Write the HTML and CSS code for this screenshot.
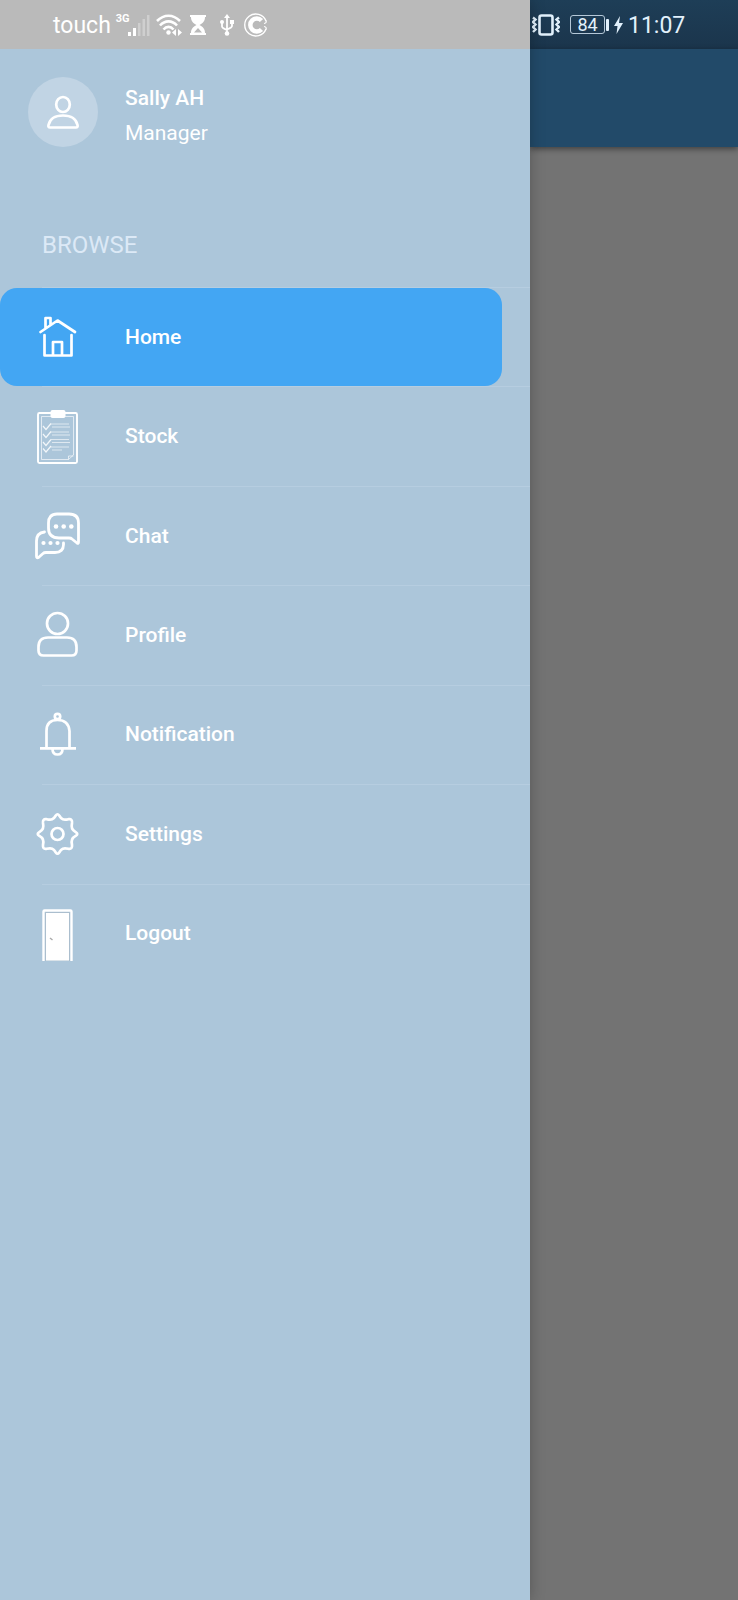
FILE: index.html
```html
<!DOCTYPE html>
<html lang="en">
<head>
<meta charset="utf-8">
<meta name="viewport" content="width=device-width, initial-scale=1">
<title>Navigation</title>
<link rel="stylesheet" href="styles.css">
</head>
<body>
<div class="layout">
  <aside class="drawer">
    <div class="status status-left">
      <span class="carrier">touch</span>
      <span class="network">3G</span>
      <svg class="signal" width="22" height="22" viewBox="0 0 22 22" fill="#fff"><path d="M0 18h3v4H0zM5 14h3v8H5z"/><path opacity=".3" d="M10 9h2.500v13H10zM14.500 5H17v17h-2.500zM19 1h2.500v21H19z"/></svg>
      <svg class="wifi" width="26" height="22" viewBox="0 0 26 22" fill="none" stroke="#fff" stroke-width="2.600"><path d="M1 7C8 0 17 0 24 7M4 11.500C9 6 16 6 21 11.500M7.500 15.500C10.500 12 14.500 12 17.500 15.500"/><circle cx="12.500" cy="18.500" r="2.200" fill="#fff" stroke="none"/><path fill="#fff" stroke="none" d="M20 15v7l-4-3.500zM22 15v7l4-3.500z"/></svg>
      <svg class="hourglass" width="16" height="22" viewBox="0 0 16 22" fill="#fff"><path fill-rule="evenodd" d="M0 1h16v2h-1c0 4-2 6-5.500 8 3.500 2 5.500 4 5.500 8h1v2H0v-2h1c0-4 2-6 5.500-8C3 9 1 7 1 3H0zM4 18.500h8L8 14z"/></svg>
      <svg class="usb" width="14" height="22" viewBox="0 0 14 22" fill="none" stroke="#fff" stroke-width="1.800"><path d="M7 2v17M2 9v3.500q0 1.500 5 3.500M12 9v3q0 1.500-5 3.500"/><path fill="#fff" stroke="none" d="M7 0l3 4H4zM10 6h4v4h-4z"/><circle cx="2" cy="8" r="2" fill="#fff" stroke="none"/><circle cx="7" cy="19.500" r="2.300" fill="#fff" stroke="none"/></svg>
      <svg class="badge" width="24" height="24" viewBox="0 0 24 24" fill="none" stroke="#fff"><path stroke-width="1.400" d="M22 8A11 11 0 1 0 22 16"/><path stroke-width="4.500" d="M17.500 7.500A6.500 6.500 0 1 0 17.500 16.500"/><path stroke-width="1.200" d="M20 10.500Q23 10 22 7.500M20 13.500Q23 14 22 16.500"/></svg>
    </div>

    <header class="user">
      <div class="avatar">
        <svg width="32" height="34" viewBox="0 0 32 34" fill="none" stroke="#fff" stroke-width="2.700"><ellipse cx="16" cy="9.500" rx="6.800" ry="7.500"/><path stroke-linejoin="round" d="M1.500 30C3 23 9 20.500 16 20.500S29 23 30.500 30Q31 32.500 29 32.500H3Q1 32.500 1.500 30z"/></svg>
      </div>
      <div class="identity">
        <div class="name">Sally AH</div>
        <div class="role">Manager</div>
      </div>
    </header>

    <h2 class="section">BROWSE</h2>

    <nav class="menu">
      <a class="item active" href="#home">
        <svg class="icon" viewBox="0 0 46 56" fill="none" stroke="#fff" stroke-width="2.700" stroke-linecap="round" stroke-linejoin="round"><path d="M5.500 23L22.500 11.500 40 23M10.500 19V9h5v6.500M9.500 26v20.500h27V26M18 46.500V33h9v13.500"/></svg>
        <span>Home</span>
      </a>
      <a class="item" href="#stock">
        <svg class="icon" viewBox="0 0 46 56" fill="none" stroke="#fff"><rect x="3" y="5" width="39" height="50" rx="1.500" stroke-width="1.900"/><path stroke-width=".8" opacity=".8" d="M6.500 8.500h32V47l-5 4.500h-27zM33.500 51.500V48h5"/><rect x="15.500" y="2" width="15" height="8" rx="2" fill="#fff" stroke="none"/><path stroke-width="1.200" opacity=".85" d="M8 18l3 3.500 5-6M8 26l3 3.500 5-6M8 34l3 3.500 5-6M8 40.500l3 3.500 5-6"/><path stroke-width="1" opacity=".6" d="M16 16h18M17 19h18M16 24h18M17 27h18M16 31.500h18M17 34.500h18M16 39h18M17 42h10"/></svg>
        <span>Stock</span>
      </a>
      <a class="item" href="#chat">
        <svg class="icon" viewBox="0 0 46 56" fill="none" stroke="#fff" stroke-width="2.800" stroke-linecap="round" stroke-linejoin="round"><path d="M22 6H34Q43.500 6 43.500 15V34Q43.500 36 42 35L37 31Q36 30 34 30H24Q13.500 30 13.500 20V15Q13.500 6 22 6z"/><path d="M9.500 24Q1.500 25 1.500 33V48Q1.500 50.500 3.500 49.500L8 45.500Q9 44.500 11 44.500H20Q28.500 44.500 28.500 36.500V35"/><g fill="#fff" stroke="none"><circle cx="21" cy="18.500" r="2.300"/><circle cx="28.700" cy="18.500" r="2.300"/><circle cx="36.300" cy="18.500" r="2.300"/><circle cx="8.500" cy="35" r="2.100"/><circle cx="15.500" cy="35" r="2.100"/><circle cx="22.500" cy="35" r="2.100"/></g></svg>
        <span>Chat</span>
      </a>
      <a class="item" href="#profile">
        <svg class="icon" viewBox="0 0 46 56" fill="none" stroke="#fff" stroke-width="2.700"><circle cx="22.500" cy="16.500" r="10.500"/><path d="M13 30.500H32Q41.500 30.500 41.500 40V43.500Q41.500 48.500 36.500 48.500H8.500Q3.500 48.500 3.500 43.500V40Q3.500 30.500 13 30.500z"/></svg>
        <span>Profile</span>
      </a>
      <a class="item" href="#notification">
        <svg class="icon" viewBox="0 0 46 56" fill="none" stroke="#fff" stroke-width="2.700"><circle cx="22.500" cy="10.500" r="2.700"/><path d="M11.500 42V25Q11.500 14 22.500 14T34.500 25V42M5 42.300H41M17.500 43Q17.500 48.500 22.500 48.500T27.500 43"/></svg>
        <span>Notification</span>
      </a>
      <a class="item" href="#settings">
        <svg class="icon" viewBox="0 0 46 56" fill="none" stroke="#fff" stroke-width="2.700" stroke-linejoin="round"><circle cx="22.500" cy="28" r="6"/><path d="M20.800 9.500Q22.500 7 24.200 9.500C26.500 13.500 28.500 14.500 33.500 13.200Q37.500 12.500 37 17C36 22 37 24 41 26.300Q43.500 28 41 29.700C37 32 36 34 37 39Q37.500 43.500 33.500 42.800C28.500 41.500 26.500 42.500 24.200 46.500Q22.500 49 20.800 46.500C18.500 42.500 16.500 41.500 11.500 42.800Q7.500 43.500 8 39C9 34 8 32 4 29.700Q1.500 28 4 26.300C8 24 9 22 8 17Q7.500 12.500 11.500 13.200C16.500 14.500 18.500 13.500 20.800 9.500z"/></svg>
        <span>Settings</span>
      </a>
      <a class="item" href="#logout">
        <svg class="icon" viewBox="0 0 46 56"><path d="M8.500 56V6.500Q8.500 5.500 9.500 5.500h26q1 0 1 1V56" fill="none" stroke="#fff" stroke-width="2.400"/><path d="M10.500 56V7.500h24V56z" fill="#fff" stroke="#9fb5c5" stroke-width=".8"/><path d="M15 33l2.500 2" stroke="#aaa" stroke-width="1.500"/></svg>
        <span>Logout</span>
      </a>
    </nav>
  </aside>

  <main class="app">
    <div class="status status-right">
      <svg class="vibrate" width="28" height="22" viewBox="0 0 28 22" fill="none" stroke="#e2f1fc"><rect x="7.500" y="1.500" width="13" height="19" rx="2" stroke-width="2.600"/><path stroke-width="2.400" d="M1 3.500l2.500 2L1 8l2.500 2.500L1 13l2.500 2.500L1 18M27 3.500l-2.500 2L27 8l-2.500 2.500L27 13l-2.500 2.500L27 18"/></svg>
      <span class="battery">84</span>
      <svg class="bolt" width="9" height="18" viewBox="0 0 9 18" fill="#e2f1fc"><path d="M6 0L0 10h3.500L2.500 18 9 7H5z"/></svg>
      <time class="clock">11:07</time>
    </div>
    <div class="appbar"></div>
    <div class="content"></div>
  </main>
</div>
</body>
</html>
```
FILE: styles.css
```css
* {
  box-sizing: border-box;
}

body {
  margin: 0;
  font-family: Roboto, "Noto Sans", sans-serif;
  color: #fff;
}

.layout {
  display: grid;
  grid-template-columns: 265fr 104fr;
  min-height: 100vh;
}

.drawer {
  z-index: 1;
  background: #acc6da;
  box-shadow: 0 0 14px rgba(0, 0, 0, 0.25);
}

.status {
  display: flex;
  align-items: center;
  height: 49px;
  white-space: nowrap;
}

.status svg {
  flex: none;
}

.status-left {
  padding-left: 53px;
  background: #bababa;
}

.carrier,
.clock {
  padding-top: 3px;
  font-size: 23px;
  line-height: 28px;
}

.network {
  align-self: flex-start;
  width: 12px;
  margin: 12px 0 0 5px;
  font-size: 11px;
  line-height: 14px;
  font-weight: 700;
}

.wifi {
  margin-left: 6px;
}

.hourglass {
  margin-left: 8px;
}

.usb {
  margin-left: 14px;
}

.badge {
  margin-left: 10px;
}

.user {
  display: flex;
  align-items: flex-start;
  gap: 27px;
  padding: 28px 28px 0;
}

.avatar {
  display: grid;
  place-items: center;
  width: 70px;
  height: 70px;
  border-radius: 50%;
  background: #c1d4e4;
}

.identity {
  padding-top: 4px;
  font-size: 21px;
  line-height: 35px;
}

.name {
  font-weight: 500;
}

.section {
  margin: 0;
  padding: 80px 42px 28px;
  font-size: 24px;
  line-height: 28px;
  font-weight: 400;
  color: #dce9f6;
}

.menu {
  display: grid;
  grid-auto-rows: 1fr;
  height: 696px;
}

.item {
  position: relative;
  display: flex;
  align-items: center;
  gap: 44px;
  padding-left: 35px;
  color: #fff;
  font-size: 21px;
  font-weight: 500;
  text-decoration: none;
}

.item::before {
  content: "";
  position: absolute;
  top: 0;
  left: 42px;
  right: 0;
  height: 1px;
  background: #b6cde0;
}

.item.active {
  isolation: isolate;
}

.item.active::after {
  content: "";
  position: absolute;
  z-index: -1;
  inset: 1px 28px 0 0;
  border-radius: 17px;
  background: #43a6f3;
}

.item.active::before {
  z-index: -1;
}

.icon {
  flex: none;
  width: 46px;
  height: 56px;
}

.app {
  display: flex;
  flex-direction: column;
  background: #737373;
}

.status-right {
  padding-left: 2px;
  background: linear-gradient(#1e3e57, #1b354c);
  color: #e2f1fc;
}

.battery {
  position: relative;
  width: 35px;
  height: 19px;
  margin-left: 10px;
  border: 1px solid #b5c8d8;
  border-radius: 3px;
  font-size: 18px;
  line-height: 18px;
  text-align: center;
}

.battery::after {
  content: "";
  position: absolute;
  top: 3px;
  right: -5px;
  width: 3px;
  height: 12px;
  border-radius: 1px;
  background: #e2f1fc;
}

.bolt {
  margin-left: 9px;
}

.clock {
  margin-left: 5px;
}

.appbar {
  height: 98px;
  background: #224a69;
  box-shadow: 0 2px 6px rgba(0, 0, 0, 0.45);
}

.content {
  flex: 1;
}
```
